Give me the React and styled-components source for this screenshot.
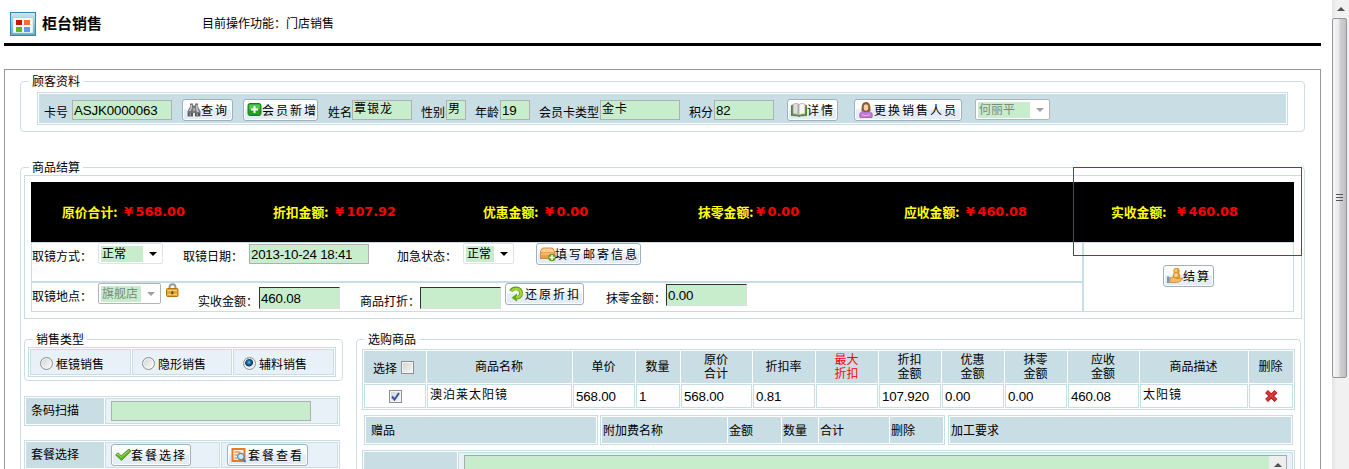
import React from "react";
import styled, { createGlobalStyle, css } from "styled-components";

const LINE = "#c9dde5";
const FILL = "#c9dde5";
const PALE = "#e8f1f7";
const GREEN = "#c7edcc";

const GlobalStyle = createGlobalStyle`
  * { box-sizing: border-box; }
  html, body { margin: 0; background: #fff; overflow: hidden; }
  body {
    font: 12px/16px "Liberation Sans", "Noto Sans CJK SC", sans-serif;
    color: #000;
  }
`;

const spot = css`
  flex: none;
  margin-left: ${(p) => p.$gap || 0}px;
  margin-top: ${(p) => p.$top || 0}px;
  width: ${(p) => (p.$w ? p.$w + "px" : "auto")};
`;

const Page = styled.div`
  display: flex;
  width: 1349px;
  height: 469px;
  overflow: hidden;
`;
const Main = styled.main`
  width: 1332px;
  padding-left: 4px;
  height: 469px;
  overflow: hidden;
`;
const Header = styled.header`
  display: flex;
  align-items: flex-start;
  width: 1317px;
  height: 46px;
  padding: 12px 0 0 6px;
  border-bottom: 3px solid #000;
`;
const Title = styled.h1`
  margin: 1px 0 0 6px;
  width: 160px;
  font: bold 15px/20px "Noto Sans CJK SC", sans-serif;
`;
const Subtitle = styled.span`
  margin-top: 3px;
  font-family: "Noto Sans CJK SC", sans-serif;
  white-space: nowrap;
`;
const Frame = styled.section`
  width: 1317px;
  height: 410px;
  margin-top: 23px;
  padding: 11px 0 0 15px;
  border: 1px solid #999;
`;
const Group = styled.section`
  position: relative;
  ${spot}
  height: ${(p) => p.$h}px;
  border: 1px solid #d0dce4;
  border-radius: 4px;
`;
const Legend = styled.div`
  width: fit-content;
  height: 16px;
  margin: -9px 0 -7px 8px;
  padding: 1px 3px 0;
  position: relative;
  background: #fff;
  white-space: nowrap;
`;
const Table = styled.div`
  ${spot}
  height: ${(p) => p.$h}px;
  padding: 1px;
  border: 1px solid ${LINE};
`;
const Cells = styled.div`
  display: flex;
  gap: 1px;
  height: ${(p) => (p.$h ? p.$h + "px" : "100%")};
  margin-bottom: 1px;
`;
const Head = styled.div`
  display: flex;
  align-items: ${(p) => (p.$center ? "center" : "flex-start")};
  justify-content: ${(p) => (p.$center ? "center" : "flex-start")};
  flex: none;
  width: ${(p) => p.$w}px;
  height: 100%;
  padding: ${(p) => p.$pad || "0"};
  background: ${FILL};
  color: ${(p) => (p.$red ? "#f00" : "#000")};
  text-align: center;
  line-height: 14px;
  white-space: pre;
`;
const Cell = styled.div`
  display: flex;
  align-items: flex-start;
  flex: none;
  width: ${(p) => p.$w}px;
  height: 100%;
  border: 1px solid ${LINE};
  background: ${(p) => (p.$pale ? PALE : "#fff")};
  padding: ${(p) => p.$pad || "0"};
  white-space: nowrap;
  font-size: ${(p) => (p.$num ? 13.33 : 12)}px;
  letter-spacing: ${(p) => (p.$wide ? 1 : p.$num ? -0.15 : 0)}px;
`;
const FormRow = styled.div`
  display: flex;
  align-items: flex-start;
  height: ${(p) => p.$h}px;
  background: ${(p) => (p.$fill ? FILL : "#fff")};
  border: ${(p) => (p.$line ? `1px solid ${LINE}` : "none")};
`;
const Label = styled.span`
  ${spot}
  height: 17px;
  line-height: 18px;
  text-indent: ${(p) => p.$indent || 0}px;
  white-space: nowrap;
`;
const Field = styled.div`
  ${spot}
  height: ${(p) => (p.$inset ? 22 : 20)}px;
  background: ${GREEN};
  border: 1px solid #b0b0b0;
  ${(p) => p.$inset && "border-color: #333 #ddd #ddd #333;"}
  padding-left: 1px;
  font-size: ${(p) => (p.$cjk ? 12 : 13.33)}px;
  letter-spacing: ${(p) => (p.$cjk ? 1 : p.$tight ? -0.25 : -0.15)}px;
  line-height: ${(p) => (p.$cjk ? 16 : p.$inset ? 22 : 19)}px;
  white-space: nowrap;
`;
const Push = styled.div`
  ${spot}
  display: flex;
  align-items: center;
  height: 22px;
  padding-left: 3px;
  border: 1px solid #9fb0bf;
  border-radius: 3px;
  background: linear-gradient(#fff 0%, #f8fafc 45%, #e4edf7 50%, #e4edf7 100%);
  box-shadow: inset 0 0 0 1px #fff;
  letter-spacing: 2px;
  line-height: 20px;
  white-space: nowrap;
  svg { flex: none; margin-right: ${(p) => p.$space || 0}px; }
`;
const PushText = styled.span`
  padding-top: 1px;
  margin-left: -1px;
`;
const SelectBox = styled.div`
  ${spot}
  display: flex;
  align-items: flex-start;
  justify-content: space-between;
  height: 21px;
  padding: 2px 5px 0 2px;
  border: 1px solid ${(p) => (p.$off ? "#b4b4b4" : "#dfe3ea")};
  border-radius: 2px;
  background: #fff;
  color: ${(p) => (p.$off ? "#7c8a7e" : "#000")};
  svg { margin-top: 6px; }
`;
const SelectText = styled.span`
  width: ${(p) => p.$w}px;
  height: 16px;
  padding-left: 1px;
  background: ${GREEN};
  line-height: 17px;
  white-space: nowrap;
`;
const Settlement = styled.div`
  width: 1278px;
  height: 144px;
  margin: 7px 0 0 3px;
  padding: 6px;
  border: 1px solid ${LINE};
`;
const Totals = styled.div`
  display: flex;
  align-items: center;
  width: 1263px;
  height: 60px;
  padding-left: 31px;
  background: #000;
  font: bold 13px/20px "DejaVu Sans", "Noto Sans CJK SC", sans-serif;
`;
const Total = styled.div`
  display: flex;
  flex: none;
  width: ${(p) => p.$w}px;
  color: #ff0;
  white-space: nowrap;
`;
const TotalName = styled.span`
  width: ${(p) => p.$w}px;
  font-family: "Noto Sans CJK SC", sans-serif;
  font-size: 12.8px;
`;
const Amount = styled.span`
  display: flex;
  color: #f00;
  font-size: 12.8px;
`;
const Yen = styled.span`
  width: 12.500px;
  padding-left: 1px;
`;
const Split = styled.div`
  display: flex;
`;
const FormColumn = styled.div`
  width: 1052px;
`;
const ActionCell = styled.div`
  display: flex;
  align-items: flex-start;
  width: 211px;
  height: 70px;
  border: 1px solid ${LINE};
`;
const Lower = styled.div`
  display: flex;
  align-items: flex-start;
  padding: 20px 0 0 3px;
`;
const LeftColumn = styled.div`
  flex: none;
  width: 319px;
`;
const Highlight = styled.div`
  position: absolute;
  left: 1052px;
  top: -1px;
  width: 229px;
  height: 89px;
  border: 1px solid #f00;
`;
const Strip = styled.div`
  display: flex;
  padding: 5px 0 0 7px;
`;
const Radio = styled.span`
  flex: none;
  width: 13px;
  height: 13px;
  margin: 7px 3px 0 9px;
  border: 1px solid #8e8f8f;
  border-radius: 50%;
  box-shadow: inset 0 0 0 1px #f4f4f4;
  background: ${(p) =>
    p.$on
      ? "radial-gradient(circle at 45% 40%, #5fc4ea 0, #1a6c9e 22%, #0b3450 40%, #e6ebee 50%)"
      : "linear-gradient(135deg, #cfd3d6, #fdfdfd)"};
`;
const Check = styled.span`
  flex: none;
  display: block;
  width: 13px;
  height: 13px;
  border: 1px solid #8e8f8f;
  box-shadow: inset 0 0 0 1px #f4f4f4;
  background: linear-gradient(135deg, #cfd3d6, #f8f8f8);
  margin: ${(p) => p.$m || "0"};
  svg { display: block; }
`;
const TextArea = styled.div`
  display: flex;
  justify-content: flex-end;
  width: 823px;
  height: 60px;
  background: ${GREEN};
  border: 1px solid #aaa;
`;
const AreaScroll = styled.div`
  display: flex;
  justify-content: center;
  width: 17px;
  padding-top: 7px;
  background: #eee;
`;
const Scrollbar = styled.aside`
  display: flex;
  flex-direction: column;
  width: 17px;
  height: 469px;
  background: linear-gradient(90deg, #e6e6e6, #f1f1f1 30%, #f1f1f1);
`;
const ScrollArrow = styled.div`
  height: 18px;
  padding: 7px 0 0 5px;
  line-height: 0;
`;
const Thumb = styled.div`
  width: 15px;
  height: 360px;
  padding: 175px 0 0 3px;
  border: 1px solid #979797;
  border-radius: 2px;
  background: linear-gradient(90deg, #f6f6f6 0, #e9e9eb 45%, #d0d0d4 55%, #bfbfc5 100%);
  line-height: 0;
`;

const Arrow = ({ off }) => (
  <svg width="8" height="4" viewBox="0 0 8 4"><path d="M0 0h8L4 4z" fill={off ? "#a0a0a0" : "#000"} /></svg>
);
const UpArrow = () => (
  <svg width="8" height="4" viewBox="0 0 8 4"><path d="M0 4h8L4 0z" fill="#505050" /></svg>
);
const Select = ({ text, tw, off, ...rest }) => (
  <SelectBox $off={off} {...rest}>
    <SelectText $w={tw}>{text}</SelectText>
    <Arrow off={off} />
  </SelectBox>
);
const Button = ({ icon, children, ...rest }) => (
  <Push {...rest}>
    {icon}
    <PushText>{children}</PushText>
  </Push>
);

const AppIcon = () => (
  <svg width="26" height="24" viewBox="0 0 26 24">
    <defs>
      <linearGradient id="win" x1="0" y1="0" x2="0" y2="1">
        <stop offset="0" stopColor="#cfe6ee" /><stop offset="1" stopColor="#5fa9c6" />
      </linearGradient>
    </defs>
    <rect x=".5" y=".5" width="25" height="23" fill="url(#win)" stroke="#2f8cab" />
    <rect x="3" y="5.500" width="20" height="15.500" fill="#f6fafc" stroke="#9cc8d8" strokeWidth=".6" />
    <rect x="6" y="8" width="6" height="5" fill="#c91212" />
    <rect x="14" y="8" width="6" height="5" fill="#f0703a" />
    <rect x="6" y="15" width="6" height="5" fill="#5fb52c" />
    <rect x="14" y="15" width="6" height="5" fill="#5f9cf0" />
  </svg>
);
const Binoculars = () => (
  <svg width="16" height="16" viewBox="0 0 16 16">
    <path d="M4 1.500h3v2h2v-2h3v3l2.500 5V14.500H9V11H7v3.500H1.500V9.500L4 4.500z" fill="#777" />
    <path d="M4.500 3h1.500v3l-1.500 3h-1.500l1.500-3zM10 3h1.500v3l1.500 4h-2l-1-3z" fill="#c4c4c4" />
    <path d="M2 11h5v3H2zM9 11h5v3H9z" fill="#555" />
    <path d="M3.500 11.500h1.500v2H3.500zM10.500 11.500h1.500v2h-1.500zM7 6h2v3H7z" fill="#a8a8a8" />
  </svg>
);
const Plus = () => (
  <svg width="16" height="16" viewBox="0 0 16 16">
    <rect x="1" y="1.500" width="13" height="12" rx="2" fill="#23a31d" stroke="#168014" />
    <rect x="2" y="2.500" width="11" height="5" rx="1" fill="#53c548" />
    <path d="M6.500 4h2v2.500H11v2H8.500V11h-2V8.500H4v-2h2.500z" fill="#fff" />
  </svg>
);
const Book = () => (
  <svg width="16" height="16" viewBox="0 0 16 16">
    <path d="M0 4l1.500-1v9L8 13.500l6.500-1.500V3L16 4v9.500l-7 .5-1 .8-1-.8-7-.5z" fill="#4f8726" stroke="#4f8726" strokeWidth=".8" />
    <path d="M2 2.500c2-1.300 4-1.300 6 0v10.500c-2-1.200-4-1.300-6-.8z" fill="#dedede" stroke="#8c8c8c" strokeWidth=".6" />
    <path d="M8 2.500c2-1.300 4-1.300 6 0v9.700c-2-.5-4-.4-6 .8z" fill="#f8f8f8" stroke="#8c8c8c" strokeWidth=".6" />
    <path d="M6.500 3h1.500v9.500l-1.500-.8z" fill="#aaa" />
  </svg>
);
const Person = () => (
  <svg width="16" height="16" viewBox="0 0 16 16">
    <path d="M3.500 8.500c0-5.500 1-8.500 4.500-8.500s4.500 3 4.500 8.500L11 10H5z" fill="#8b5a2b" />
    <ellipse cx="8" cy="5.500" rx="2.300" ry="3.200" fill="#f6cfa4" />
    <path d="M2 15.500c-1-3.500.5-6 3.500-6L8 11l2.500-1.500c3 0 4.500 2.500 3.500 6z" fill="#c579d8" stroke="#9a55ae" strokeWidth=".8" />
    <path d="M4 12.500c2 1.500 5 1.500 7.500 0" stroke="#e3b2ee" fill="none" />
  </svg>
);
const Box = () => (
  <svg width="16" height="16" viewBox="0 0 16 16">
    <path d="M2.500 2h10L15 6v6.500H0V6z" fill="#eba04b" stroke="#c9781f" strokeWidth=".8" />
    <path d="M3 2.500h9L14.500 6H.5z" fill="#f8cf8b" />
    <path d="M1 7h13v2H1z" fill="#f5ba68" />
    <circle cx="12" cy="11.500" r="3.800" fill="#5f9d28" />
    <path d="M12 9v5M9.500 11.500h5" stroke="#fff" strokeWidth="1.500" />
  </svg>
);
const Undo = () => (
  <svg width="16" height="16" viewBox="0 0 16 16">
    <path d="M2 5.200C4 1 11.800 1.500 12 7c.1 3.500-2.300 4.700-5 4.700" fill="none" stroke="#5f9d14" strokeWidth="3.800" />
    <path d="M8 7.500v8.300L2.500 11.700z" fill="#6ba91a" />
    <path d="M2.300 5.200C4.500 1.800 11.600 2 12 7c0 3-2 4.400-5 4.400" fill="none" stroke="#a3d52c" strokeWidth="2.200" />
  </svg>
);
const Coins = () => (
  <svg width="16" height="16" viewBox="0 0 16 16">
    <circle cx="9.500" cy="3" r="3.200" fill="#d9942b" />
    <circle cx="9.500" cy="8" r="3.800" fill="#e0992f" />
    <circle cx="9" cy="2.500" r="1.700" fill="#f5ca74" />
    <circle cx="9" cy="7.200" r="1.900" fill="#f7d48c" />
    <path d="M3 10l4-1 3 1.500 5.500-.5c.5 1.500-3 4.500-6 4.500H3z" fill="#f3bd5c" stroke="#c9842c" strokeWidth=".8" />
    <path d="M0 8.500h2.500V15H0z" fill="#8090a5" />
  </svg>
);
const Lock = () => (
  <svg width="14" height="14" viewBox="0 0 14 14">
    <path d="M3.500 7V4.500C3.500 0 9.500 0 9.500 4.500V7" fill="none" stroke="#999" strokeWidth="2" />
    <rect x=".5" y="5.500" width="11.500" height="8" rx="1" fill="#eba42a" stroke="#b8730b" />
    <path d="M1.500 7.500h9.500M1.500 11.500h9.500" stroke="#f9d06e" />
    <path d="M5.300 8.300h2v3h-2z" fill="#704400" />
  </svg>
);
const Tick = () => (
  <svg width="17" height="16" viewBox="0 0 17 16">
    <path d="M.7 8L3 5.800l3.200 3L14 2l2 2.300L6.500 13.500z" fill="#61b51f" stroke="#458c14" strokeWidth=".8" />
    <path d="M2 8l1-1 3.300 3L14 3.500" fill="none" stroke="#a0dc5e" />
  </svg>
);
const Lookup = () => (
  <svg width="16" height="16" viewBox="0 0 16 16">
    <rect x="1.500" y="2" width="12" height="12" fill="#fdf1e6" stroke="#ea7a25" strokeWidth="2" />
    <path d="M3.500 5h6M3.500 8h3M3.500 11h3" stroke="#ee9a58" strokeWidth="1.500" />
    <circle cx="9.800" cy="9.500" r="3.200" fill="#c9e6fa" stroke="#4a8dc2" strokeWidth="1.200" />
    <path d="M12 12l2.500 3" stroke="#4a82ba" strokeWidth="2" />
  </svg>
);
const Cross = () => (
  <svg width="15" height="14" viewBox="0 0 15 14">
    <path d="M2.500 2.500l9.500 9M12 2.500l-9.500 9" stroke="#b31616" strokeWidth="4" />
    <path d="M2.800 2.600l9 8.500M11.700 2.600l-9 8.500" stroke="#de3c38" strokeWidth="2" />
  </svg>
);
const Grip = () => (
  <svg width="8" height="9" viewBox="0 0 8 9"><path d="M0 .5h7M0 3.500h7M0 6.500h7" stroke="#555" /></svg>
);

const totals = [
  ["原价合计:", "568.00", 211, 61],
  ["折扣金额:", "107.92", 210, 61],
  ["优惠金额:", "0.00", 215, 61],
  ["抹零金额:", "0.00", 206, 57],
  ["应收金额:", "460.08", 207, 61],
  ["实收金额:", "460.08", 150, 65],
];
const columns = [
  ["商品名称", 145, "澳泊莱太阳镜", "cjk"],
  ["单价", 62, "568.00"],
  ["数量", 44, "1"],
  ["原价\n合计", 71, "568.00"],
  ["折扣率", 62, "0.81"],
  ["最大\n折扣", 62, ""],
  ["折扣\n金额", 62, "107.920"],
  ["优惠\n金额", 62, "0.00"],
  ["抹零\n金额", 62, "0.00"],
  ["应收\n金额", 71, "460.08"],
  ["商品描述", 108, "太阳镜", "cjk"],
];

export default function App() {
  return (
    <Page>
      <GlobalStyle />
      <Main>
        <Header>
          <AppIcon />
          <Title>柜台销售</Title>
          <Subtitle>目前操作功能：门店销售</Subtitle>
        </Header>
        <Frame>
          <Group $w={1285} $h={51}>
            <Legend>顾客资料</Legend>
            <Table $gap={16} $top={10} $w={1251} $h={33}>
              <FormRow $fill $h={29}>
                <Label $gap={5} $top={10} $w={24}>卡号</Label>
                <Field $gap={4} $top={6} $w={100}>ASJK0000063</Field>
                <Button $gap={10} $top={5} $w={51} icon={<Binoculars />}>查询</Button>
                <Button $gap={10} $top={5} $w={75} icon={<Plus />}>会员新增</Button>
                <Label $gap={10} $top={10} $w={24}>姓名</Label>
                <Field $cjk $top={6} $w={60}>覃银龙</Field>
                <Label $gap={10} $top={10} $w={24} $indent={-1}>性别</Label>
                <Field $cjk $top={6} $w={20}>男</Field>
                <Label $gap={10} $top={10} $w={24} $indent={-1}>年龄</Label>
                <Field $top={6} $w={30}>19</Field>
                <Label $gap={10} $top={10} $w={60} $indent={-1}>会员卡类型</Label>
                <Field $cjk $top={6} $w={80}>金卡</Field>
                <Label $gap={10} $top={10} $w={24} $indent={-1}>积分</Label>
                <Field $top={6} $w={60}>82</Field>
                <Button $gap={13} $top={5} $w={51} $space={1} icon={<Book />}>详情</Button>
                <Button $gap={16} $top={5} $w={108} $space={1} icon={<Person />}>更换销售人员</Button>
                <Select $gap={13} $top={5} $w={75} tw={52} off text="何丽平" />
              </FormRow>
            </Table>
          </Group>

          <Group $top={35} $w={1285} $h={330}>
            <Legend>商品结算</Legend>
            <Settlement>
              <Totals>
                {totals.map(([name, value, w, nw]) => (
                  <Total key={name} $w={w}>
                    <TotalName $w={nw}>{name}</TotalName>
                    <Amount><Yen>¥</Yen>{value}</Amount>
                  </Total>
                ))}
              </Totals>
              <Split>
                <FormColumn>
                  <FormRow $line $h={40}>
                    <Label $top={5} $w={60}>取镜方式：</Label>
                    <Select $gap={6} $w={65} tw={42} text="正常" />
                    <Label $gap={20} $top={5} $w={60}>取镜日期：</Label>
                    <Field $tight $gap={6} $top={1} $w={120}>2013-10-24 18:41</Field>
                    <Label $gap={28} $top={5} $w={60}>加急状态：</Label>
                    <Select $gap={6} $w={51} tw={28} text="正常" />
                    <Button $gap={22} $w={105} icon={<Box />}>填写邮寄信息</Button>
                  </FormRow>
                  <FormRow $line $h={30}>
                    <Label $top={5} $w={60}>取镜地点：</Label>
                    <Select $gap={6} $w={63} tw={40} off text="旗舰店" />
                    <Label $gap={5} $w={14}><Lock /></Label>
                    <Label $gap={18} $top={10} $w={60}>实收金额：</Label>
                    <Field $inset $gap={1} $top={4} $w={81}>460.08</Field>
                    <Label $gap={20} $top={10} $w={60}>商品打折：</Label>
                    <Field $inset $top={4} $w={81} />
                    <Button $gap={4} $w={79} $space={1} icon={<Undo />}>还原折扣</Button>
                    <Label $gap={22} $top={7} $w={60}>抹零金额：</Label>
                    <Field $inset $top={1} $w={81}>0.00</Field>
                  </FormRow>
                </FormColumn>
                <ActionCell>
                  <Button $gap={79} $top={22} $w={51} $space={1} icon={<Coins />}>结算</Button>
                </ActionCell>
              </Split>
            </Settlement>

            <Lower>
              <LeftColumn>
                <Group $w={319} $h={42}>
                  <Legend>销售类型</Legend>
                  <Table $gap={3} $top={7} $w={308} $h={30}>
                    <Cells>
                      <Cell $pale $w={101}><Radio /><Label $top={6}>框镜销售</Label></Cell>
                      <Cell $pale $w={100}><Radio /><Label $top={6}>隐形销售</Label></Cell>
                      <Cell $pale $w={101}><Radio $on /><Label $top={6}>辅料销售</Label></Cell>
                    </Cells>
                  </Table>
                </Group>
                <Table $top={15} $w={316} $h={30}>
                  <Cells>
                    <Head $w={78} $pad="6px 0 0 5px">条码扫描</Head>
                    <Cell $pale $w={233} $pad="2px 0 0 5px"><Field $w={200} /></Cell>
                  </Cells>
                </Table>
                <Table $top={14} $w={316} $h={30}>
                  <Cells>
                    <Head $w={78} $pad="6px 0 0 5px">套餐选择</Head>
                    <Cell $pale $w={115} $pad="1px 0 0 5px"><Button $w={80} icon={<Tick />}>套餐选择</Button></Cell>
                    <Cell $pale $w={117} $pad="1px 0 0 5px"><Button $w={81} $space={2} icon={<Lookup />}>套餐查看</Button></Cell>
                  </Cells>
                </Table>
              </LeftColumn>

              <Group $gap={13} $w={945} $h={160}>
                <Legend>选购商品</Legend>
                <Table $gap={5} $top={9} $w={933} $h={61}>
                  <Cells $h={32}>
                    <Head $center $w={62} $pad="4px 3px 0 0">选择<Check $m="-3px 0 0 4px" /></Head>
                    {columns.map(([name, w]) => (
                      <Head key={name} $center $w={w} $red={name.startsWith("最大")} $pad="0 1px 0 0">{name}</Head>
                    ))}
                    <Head $center $w={44} $pad="0 1px 0 0">删除</Head>
                  </Cells>
                  <Cells $h={24}>
                    <Cell $w={62}>
                      <Check $m="5px 0 0 24px">
                        <svg width="11" height="11" viewBox="0 0 11 11"><path d="M2 5.500l2.500 3L9 2" fill="none" stroke="#3a55a0" strokeWidth="2" /></svg>
                      </Check>
                    </Cell>
                    {columns.map(([name, w, value, kind]) => (
                      <Cell key={name} $w={w} $num={!kind} $wide={!!kind} $pad={kind ? "2px 0 0 2px" : "4px 0 0 2px"}>
                        {value}
                      </Cell>
                    ))}
                    <Cell $w={44} $pad="4px 0 0 14px"><Cross /></Cell>
                  </Cells>
                </Table>
                <Strip>
                  <Table $w={234} $h={30}>
                    <Cells><Head $w={230} $pad="7px 0 0 5px">赠品</Head></Cells>
                  </Table>
                  <Table $gap={2} $w={345} $h={30}>
                    <Cells>
                      <Head $w={125} $pad="7px 0 0 1px">附加费名称</Head>
                      <Head $w={53} $pad="7px 0 0 1px">金额</Head>
                      <Head $w={36} $pad="7px 0 0 1px">数量</Head>
                      <Head $w={70} $pad="7px 0 0 1px">合计</Head>
                      <Head $w={53} $pad="7px 0 0 1px">删除</Head>
                    </Cells>
                  </Table>
                  <Table $gap={3} $w={345} $h={30}>
                    <Cells><Head $w={341} $pad="7px 0 0 1px">加工要求</Head></Cells>
                  </Table>
                </Strip>
                <Table $gap={5} $top={5} $w={933} $h={60}>
                  <Cells>
                    <Head $w={93} />
                    <Cell $pale $w={835} $pad="2px 0 0 5px">
                      <TextArea><AreaScroll><UpArrow /></AreaScroll></TextArea>
                    </Cell>
                  </Cells>
                </Table>
              </Group>
            </Lower>
            <Highlight />
          </Group>
        </Frame>
      </Main>
      <Scrollbar>
        <ScrollArrow><UpArrow /></ScrollArrow>
        <Thumb><Grip /></Thumb>
      </Scrollbar>
    </Page>
  );
}
